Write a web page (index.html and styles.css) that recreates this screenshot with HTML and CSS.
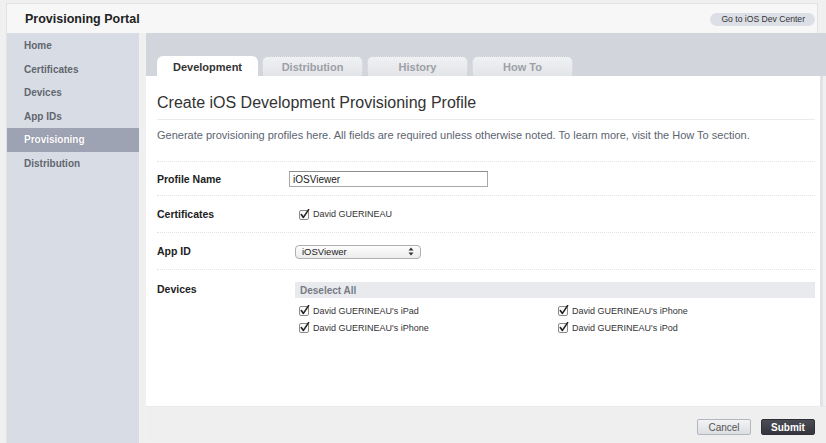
FILE: index.html
```html
<!DOCTYPE html>
<html>
<head>
<meta charset="utf-8">
<title>Provisioning Portal</title>
<link rel="stylesheet" href="styles.css">
</head>
<body>
<div class="page">
  <header class="topbar">
    <h1 class="brand">Provisioning Portal</h1>
    <a class="devcenter" href="#">Go to iOS Dev Center</a>
  </header>
  <div class="main">
    <nav class="sidebar">
      <a class="nav-item" href="#">Home</a>
      <a class="nav-item" href="#">Certificates</a>
      <a class="nav-item" href="#">Devices</a>
      <a class="nav-item" href="#">App IDs</a>
      <a class="nav-item active" href="#">Provisioning</a>
      <a class="nav-item" href="#">Distribution</a>
    </nav>
    <section class="content">
      <div class="tabband">
        <a class="tab active" href="#">Development</a>
        <a class="tab" href="#">Distribution</a>
        <a class="tab" href="#">History</a>
        <a class="tab" href="#">How To</a>
      </div>
      <div class="panel">
        <h2 class="title">Create iOS Development Provisioning Profile</h2>
        <p class="desc">Generate provisioning profiles here. All fields are required unless otherwise noted. To learn more, visit the How To section.</p>
        <div class="row r1">
          <div class="label">Profile Name</div>
          <div class="value"><input class="textfield" type="text" value="iOSViewer"></div>
        </div>
        <div class="row r2">
          <div class="label">Certificates</div>
          <div class="value cert">
            <span class="check"><svg width="11" height="11" viewBox="0 0 11 11"><rect x="0.5" y="1.5" width="9" height="9" rx="1.5" fill="#fafafa" stroke="#8a8a8a"/><path d="M2.3 5.6 L4.4 8.4 L9.6 0.6" fill="none" stroke="#222" stroke-width="1.6" stroke-linecap="round" stroke-linejoin="round"/></svg></span>
            <span class="chklabel">David GUERINEAU</span>
          </div>
        </div>
        <div class="row r3">
          <div class="label">App ID</div>
          <div class="value">
            <div class="select"><span>iOSViewer</span><svg width="6" height="9" viewBox="0 0 6 9"><path d="M3 0.5 L5.5 3.5 H0.5 Z M3 8.5 L5.5 5.5 H0.5 Z" fill="#333"/></svg></div>
          </div>
        </div>
        <div class="row r4">
          <div class="label">Devices</div>
          <div class="value devices">
            <div class="deselect">Deselect All</div>
            <div class="devgrid">
              <div class="dev"><span class="check"><svg width="11" height="11" viewBox="0 0 11 11"><rect x="0.5" y="1.5" width="9" height="9" rx="1.5" fill="#fafafa" stroke="#8a8a8a"/><path d="M2.3 5.6 L4.4 8.4 L9.6 0.6" fill="none" stroke="#222" stroke-width="1.6" stroke-linecap="round" stroke-linejoin="round"/></svg></span><span class="chklabel">David GUERINEAU's iPad</span></div>
              <div class="dev"><span class="check"><svg width="11" height="11" viewBox="0 0 11 11"><rect x="0.5" y="1.5" width="9" height="9" rx="1.5" fill="#fafafa" stroke="#8a8a8a"/><path d="M2.3 5.6 L4.4 8.4 L9.6 0.6" fill="none" stroke="#222" stroke-width="1.6" stroke-linecap="round" stroke-linejoin="round"/></svg></span><span class="chklabel">David GUERINEAU's iPhone</span></div>
              <div class="dev"><span class="check"><svg width="11" height="11" viewBox="0 0 11 11"><rect x="0.5" y="1.5" width="9" height="9" rx="1.5" fill="#fafafa" stroke="#8a8a8a"/><path d="M2.3 5.6 L4.4 8.4 L9.6 0.6" fill="none" stroke="#222" stroke-width="1.6" stroke-linecap="round" stroke-linejoin="round"/></svg></span><span class="chklabel">David GUERINEAU's iPhone</span></div>
              <div class="dev"><span class="check"><svg width="11" height="11" viewBox="0 0 11 11"><rect x="0.5" y="1.5" width="9" height="9" rx="1.5" fill="#fafafa" stroke="#8a8a8a"/><path d="M2.3 5.6 L4.4 8.4 L9.6 0.6" fill="none" stroke="#222" stroke-width="1.6" stroke-linecap="round" stroke-linejoin="round"/></svg></span><span class="chklabel">David GUERINEAU's iPod</span></div>
            </div>
          </div>
        </div>
      </div>
      <div class="footer">
        <button class="btn cancel" type="button">Cancel</button>
        <button class="btn submit" type="button">Submit</button>
      </div>
    </section>
  </div>
</div>
</body>
</html>
```
FILE: styles.css
```css
* { box-sizing: border-box; }
html, body { margin: 0; padding: 0; }
body {
  background: #f0f0f0;
  font-family: "Liberation Sans", Arial, sans-serif;
  color: #333;
  width: 826px;
  height: 443px;
  overflow: hidden;
}
a { text-decoration: none; }
.page {
  padding: 3px 0 0 6px;
}
.topbar {
  width: 812px;
  height: 30px;
  background: #f7f7f7;
  border-top: 1px solid #e2e2e2;
  border-left: 1px solid #e2e2e2;
  border-right: 1px solid #e2e2e2;
  display: flex;
  align-items: center;
  justify-content: space-between;
  padding: 0 2px 0 18px;
}
.brand {
  margin: 0;
  font-size: 12.5px;
  font-weight: bold;
  color: #222;
}
.devcenter {
  display: block;
  height: 13px;
  line-height: 13px;
  padding: 0 10px 0 11px;
  border-radius: 7px;
  background: #dcdfe6;
  color: #333;
  font-size: 8.6px;
  margin-top: 2px;
}
.main {
  display: flex;
  height: 410px;
}
.sidebar {
  width: 133px;
  background: #d8dde5;
  border-left: 1px solid #e2e2e2;
  padding-top: 1px;
  display: flex;
  flex-direction: column;
}
.nav-item {
  display: block;
  height: 23.6px;
  line-height: 24.5px;
  padding-left: 17px;
  font-size: 10px;
  font-weight: bold;
  color: #62666e;
}
.nav-item.active {
  background: #9ea3b4;
  color: #fff;
  text-shadow: 0 0 1px rgba(60,60,80,0.4);
}
.content {
  margin-left: 7px;
  width: 680px;
  display: flex;
  flex-direction: column;
}
.tabband {
  height: 43px;
  background: #d2d5db;
  display: flex;
  align-items: flex-end;
  gap: 4px;
  padding-left: 11px;
}
.tab {
  width: 101px;
  height: 20px;
  line-height: 21px;
  text-align: center;
  font-size: 11px;
  font-weight: bold;
  color: #9c9fa6;
  background: linear-gradient(#f0f1f3, #e3e4e8);
  border-radius: 6px 6px 0 0;
  border: 1px dotted #c9ccd2;
  border-bottom: none;
}
.tab.active {
  background: #fff;
  color: #333;
  border-color: #fff;
}
.panel {
  height: 330px;
  background: #fff;
  margin-right: 3px;
  border-right: 3px solid #dfe2e7;
  padding: 0 5px 0 11px;
}
.title {
  margin: 0;
  padding-top: 17px;
  height: 44px;
  font-size: 16px;
  font-weight: normal;
  color: #333;
  line-height: 20px;
  border-bottom: 1px solid #ebebeb;
}
.desc {
  margin: 0;
  padding-top: 8px;
  height: 41px;
  font-size: 11px;
  line-height: 14px;
  color: #5c6470;
}
.row {
  display: grid;
  grid-template-columns: 132px 1fr;
  border-top: 1px dotted #e3e3e3;
  align-items: center;
}
.r1 { height: 34px; }
.r2 { height: 37px; }
.r3 { height: 37px; }
.r4 { align-items: start; padding-top: 11px; }
.label {
  font-size: 10.5px;
  font-weight: bold;
  color: #222;
  line-height: 16px;
}
.value {
  font-size: 9px;
  color: #444;
}
.textfield {
  display: block;
  width: 199px;
  height: 16px;
  border: 1px solid #a8a8a8;
  border-top-color: #8c8c8c;
  padding: 0 3px;
  font-family: "Liberation Sans", Arial, sans-serif;
  font-size: 10px;
  color: #222;
  outline: none;
  margin-top: 1px;
}
.cert {
  display: flex;
  align-items: center;
  padding-left: 10px;
}
.check {
  display: inline-flex;
  width: 11px;
  height: 11px;
  margin-right: 3px;
}
.chklabel {
  font-size: 9px;
  color: #333;
}
.select {
  margin-left: 6px;
  width: 126px;
  height: 14px;
  border: 1px solid #b0b0b0;
  border-radius: 4px;
  background: linear-gradient(#fdfdfd, #ececec);
  display: flex;
  align-items: center;
  justify-content: space-between;
  padding: 0 6px 0 6px;
  font-size: 9.5px;
  color: #222;
  margin-top: 1px;
}
.devices {
  padding-left: 6px;
}
.deselect {
  height: 16px;
  line-height: 17px;
  background: #e9eaee;
  font-size: 10px;
  font-weight: bold;
  color: #767b86;
  padding-left: 5px;
  margin-top: 1px;
}
.devgrid {
  margin-top: 4px;
  display: grid;
  grid-template-columns: 259px 1fr;
  grid-auto-rows: 17px;
}
.dev {
  display: flex;
  align-items: center;
  padding-left: 4px;
}
.footer {
  height: 36px;
  background: #efefef;
  border-top: 1px dotted #e6e6e6;
  display: flex;
  justify-content: flex-end;
  align-items: flex-start;
  gap: 10px;
  padding: 12px 11px 0 0;
}
.btn {
  width: 54px;
  height: 16px;
  padding: 0;
  font-family: "Liberation Sans", Arial, sans-serif;
  font-size: 10px;
  border-radius: 2px;
  cursor: pointer;
}
.cancel {
  background: linear-gradient(#f2f3f5, #dcdee3);
  border: 1px solid #b3b6bc;
  color: #555;
}
.submit {
  background: linear-gradient(#4a4c54, #35363d);
  border: 1px solid #2e2f35;
  color: #fff;
  font-weight: bold;
}
```
